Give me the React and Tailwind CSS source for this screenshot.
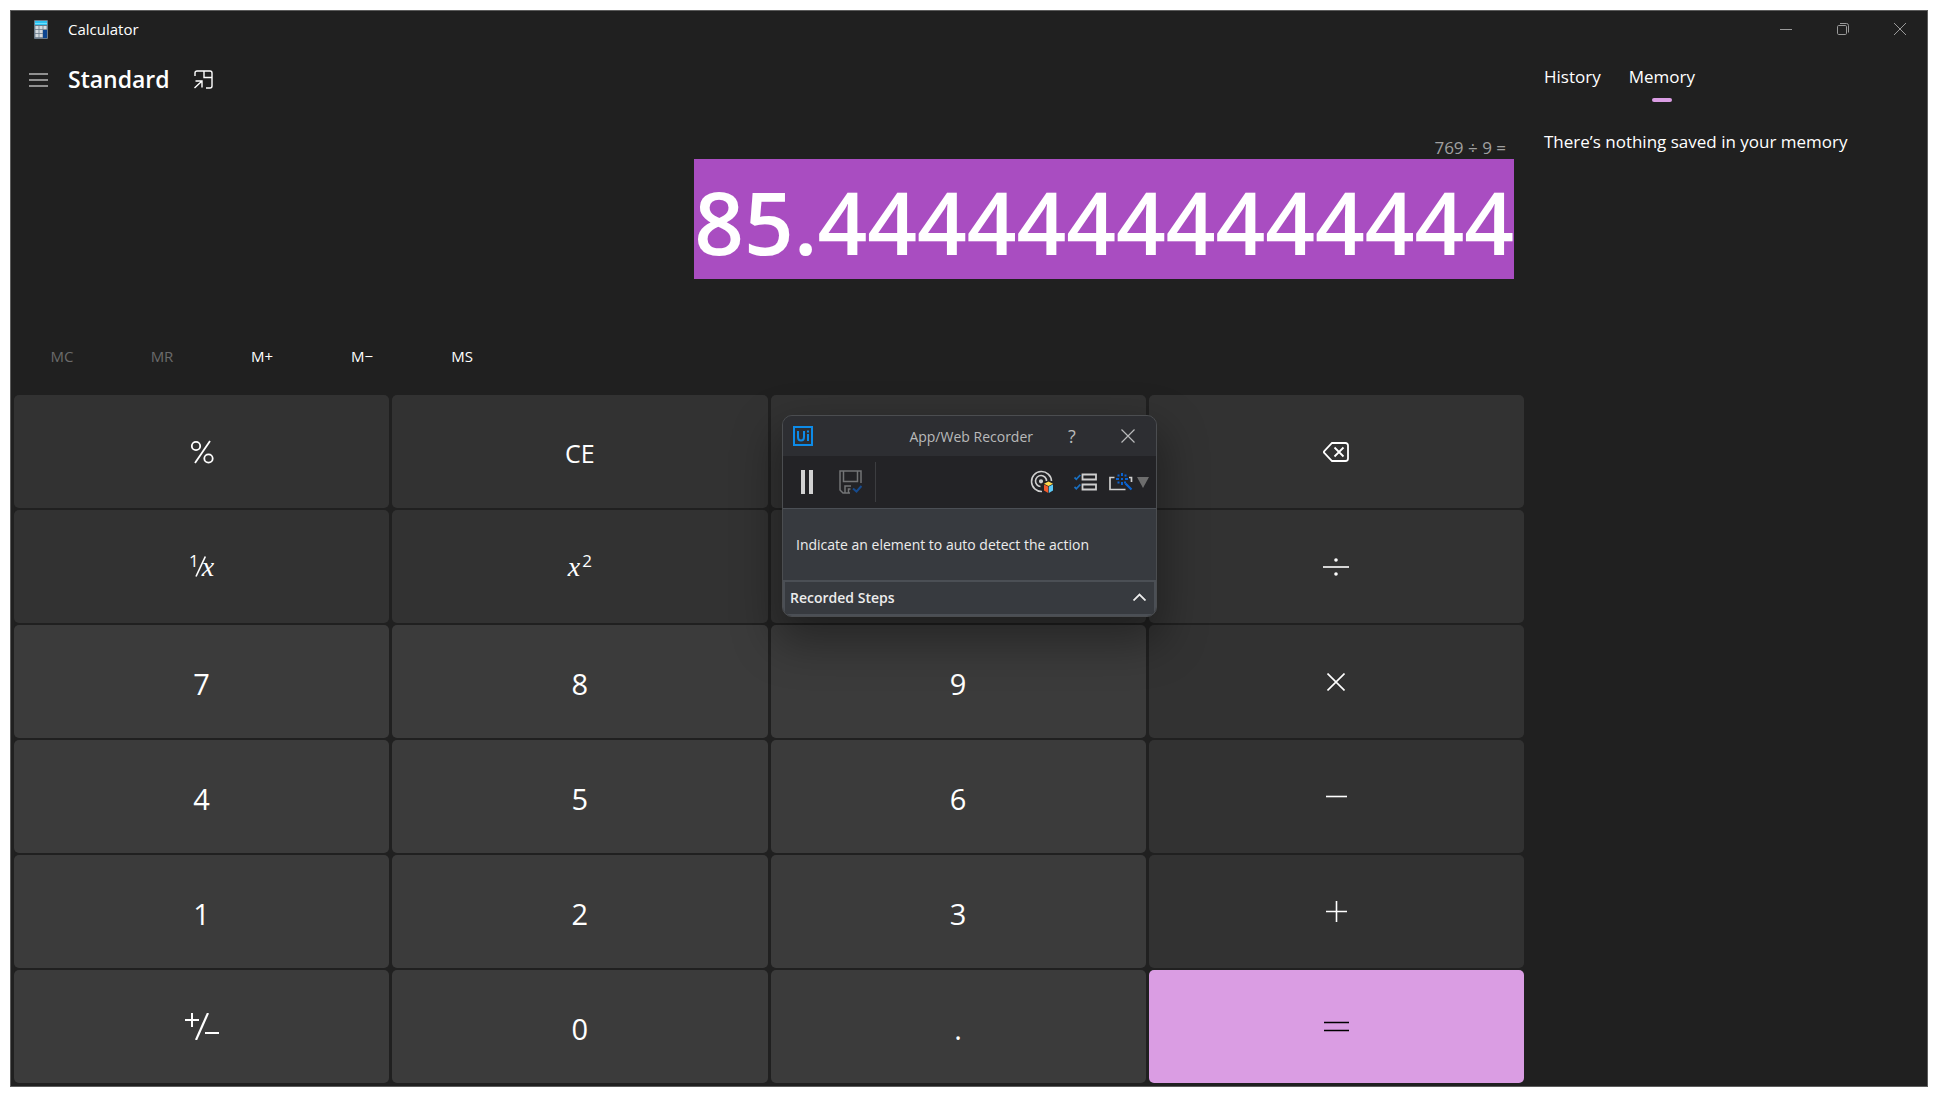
import React from "react";

const stroke = { fill: "none", stroke: "currentColor" };

function CalculatorLogo() {
  return (
    <svg width="14" height="19" viewBox="0 0 14 19" aria-hidden="true">
      <rect width="14" height="19" rx="1" fill="#6b7b8a" />
      <rect x="1" y="1" width="12" height="4" fill="#2cc3f3" />
      <rect x="1" y="3" width="12" height="1" fill="#6fe0ff" />
      {[6, 10, 14].map((y) =>
        [1, 5, 9].map((x) => (
          <rect key={`${x}-${y}`} x={x + 0.4} y={y} width="3.2" height="3.2" fill="#d5dbe0" />
        ))
      )}
      <rect x="9" y="10" width="4" height="8" fill="#0c4590" />
    </svg>
  );
}

function TitleBar() {
  return (
    <header className="flex h-9 items-center">
      <div className="flex flex-1 items-center gap-5 pl-[23px]">
        <CalculatorLogo />
        <span className="text-[15px] leading-5">Calculator</span>
      </div>
      <div className="-mr-px flex text-[#9a9a9a]">
        <button aria-label="Minimize" className="flex h-[34px] w-[57px] items-center justify-center">
          <svg width="12" height="12" viewBox="0 0 12 12" {...stroke}>
            <path d="M0 6.5h12" />
          </svg>
        </button>
        <button aria-label="Restore" className="flex h-[34px] w-[57px] items-center justify-center">
          <svg width="12" height="12" viewBox="0 0 12 12" {...stroke}>
            <rect x="0.5" y="2.5" width="9" height="9" rx="1.2" />
            <path d="M3 0.5h6.5a2 2 0 0 1 2 2V9.5" />
          </svg>
        </button>
        <button aria-label="Close" className="flex h-[34px] w-[57px] items-center justify-center">
          <svg width="12" height="12" viewBox="0 0 12 12" {...stroke}>
            <path d="M0 0l12 12M12 0L0 12" />
          </svg>
        </button>
      </div>
    </header>
  );
}

const svg = (w, h, children, sw = 1.6) => (
  <svg width={w} height={h} viewBox={`0 0 ${w} ${h}`} fill="none" stroke="currentColor" strokeWidth={sw} aria-hidden="true">
    {children}
  </svg>
);

const OneOver = (
  <span className="flex items-center leading-8">
    <span className="-mt-3 text-[17px]">1</span>
    <svg width="11" height="21" viewBox="0 0 11 21" className="-ml-1" aria-hidden="true">
      <path d="M1 20.500L10.300 0.500" stroke="currentColor" strokeWidth="1.600" />
    </svg>
    <span className="-ml-1 font-['Liberation_Serif'] text-[28px] italic">x</span>
  </span>
);

const Square = (
  <span className="flex items-center leading-8">
    <span className="font-['Liberation_Serif'] text-[28px] italic">x</span>
    <span className="-mt-3 ml-0.5 text-[17px]">2</span>
  </span>
);

const KEYS = [
  { id: "Percent", kind: "op", face: svg(24, 24, <><circle cx="6" cy="6" r="4.200" /><circle cx="18.500" cy="18.500" r="4.200" /><path d="M20 1L5 23" /></>, 1.8) },
  { id: "CE", kind: "op", face: <span className="mt-1 text-[25px]">CE</span> },
  { id: "C", kind: "op", face: <span /> },
  { id: "Backspace", kind: "op", face: svg(26, 20, <><path d="M9 1h13.500a2.500 2.500 0 0 1 2.500 2.500v13a2.500 2.500 0 0 1-2.500 2.500H9L1.500 11.200a1.700 1.700 0 0 1 0-2.400z" /><path d="M11.500 5.500l9 9M20.500 5.500l-9 9" /></>, 1.8) },
  { id: "Reciprocal", kind: "op", face: OneOver },
  { id: "Square", kind: "op", face: Square },
  { id: "Square root", kind: "op", face: <span /> },
  { id: "Divide", kind: "op", face: svg(26, 20, <><path d="M0 10h26" /><circle cx="13" cy="3" r="1" fill="currentColor" /><circle cx="13" cy="17" r="1" fill="currentColor" /></>) },
  { id: "7", kind: "num" },
  { id: "8", kind: "num" },
  { id: "9", kind: "num" },
  { id: "Multiply", kind: "op", face: svg(18, 18, <path d="M0.500 0.500l17 17M17.500 0.500l-17 17" />) },
  { id: "4", kind: "num" },
  { id: "5", kind: "num" },
  { id: "6", kind: "num" },
  { id: "Subtract", kind: "op", face: svg(21, 21, <path d="M0 10.500h21" />) },
  { id: "1", kind: "num" },
  { id: "2", kind: "num" },
  { id: "3", kind: "num" },
  { id: "Add", kind: "op", face: svg(21, 21, <path d="M0 10.500h21M10.500 0v21" />) },
  { id: "Negate", kind: "num", face: svg(34, 27, <><path d="M0 7h14M7 0v14M20 20h14" /><path d="M23 0L11 27" strokeWidth="2.200" /></>, 2) },
  { id: "0", kind: "num" },
  { id: ".", kind: "num" },
  { id: "Equals", kind: "eq", face: svg(25, 11, <path d="M0 1.500h25M0 9.500h25" />) },
];

const KIND = {
  op: "bg-[#323232]",
  num: "bg-[#3b3b3b]",
  eq: "bg-[#da9de3] text-black",
};

function Keypad() {
  return (
    <div className="grid flex-1 auto-rows-fr grid-cols-4 gap-x-[3px] gap-y-0.5 px-[3px] pb-[3px]">
      {KEYS.map((k) => (
        <button key={k.id} aria-label={k.id} className={`flex items-center justify-center rounded-[5px] ${KIND[k.kind]}`}>
          {k.face ?? <span className="mt-1 text-[29px]">{k.id}</span>}
        </button>
      ))}
    </div>
  );
}

function MemoryBar() {
  const items = [
    ["MC", true],
    ["MR", true],
    ["M+", false],
    ["M−", false],
    ["MS", false],
  ];
  return (
    <div className="flex h-[76px] pb-0.5 pl-px">
      {items.map(([label, off]) => (
        <button key={label} disabled={off} className="w-[100px] text-[15px] disabled:text-[#6b6b6b]">
          {label}
        </button>
      ))}
    </div>
  );
}

function Display() {
  return (
    <section className="flex h-[224px] flex-col items-end">
      <p className="mt-[41px] pr-[21px] text-[17px] leading-[23px] text-[#a0a0a0]">769 ÷ 9 =</p>
      <output className="mr-[13px] block h-[120px] bg-[#a94dc1] text-[87px] leading-[125px] font-semibold">
        85.44444444444444
      </output>
    </section>
  );
}

function SidePanel() {
  return (
    <aside className="w-[400px] shrink-0 pl-[17px] text-[17px] leading-6">
      <div role="tablist" className="flex gap-7 pt-[18px]">
        <button role="tab" aria-selected="false" className="flex h-[38px] flex-col">History</button>
        <button role="tab" aria-selected="true" className="flex h-[38px] flex-col items-center gap-[9px]">
          <span>Memory</span>
          <span className="h-1 w-5 shrink-0 rounded-full bg-[#da9de3]" />
        </button>
      </div>
      <p className="mt-[27px]">There’s nothing saved in your memory</p>
    </aside>
  );
}

function Recorder() {
  return (
    <section
      aria-label="App/Web Recorder"
      className="absolute top-[415px] left-[782px] w-[375px] overflow-hidden rounded-[10px] border border-[#4b4d50] bg-[#373a3f] shadow-[0_20px_44px_6px_rgba(0,0,0,0.35)]"
    >
      <div className="flex h-10 items-center bg-[#2d2e32] pl-[10px] text-[#b9babb]">
        <svg width="20" height="20" viewBox="0 0 20 20" aria-label="UiPath">
          <rect x="1" y="1" width="18" height="18" fill="none" stroke="#0d8be8" strokeWidth="2" />
          <path d="M5 5v6q0 3.500 3 3.500t3-3.500V5M15 8v7M15 4.500v2" fill="none" stroke="#0d8be8" strokeWidth="2" />
        </svg>
        <h2 className="ml-auto text-[14px]">App/Web Recorder</h2>
        <button aria-label="Help" className="ml-[29px] w-5 text-[18px]">?</button>
        <button aria-label="Close recorder" className="mr-[21px] ml-[39px]">
          <svg width="14" height="14" viewBox="0 0 14 14" {...stroke} strokeWidth="1.2">
            <path d="M0.500 0.500l13 13M13.500 0.500l-13 13" />
          </svg>
        </button>
      </div>
      <div className="flex h-[53px] items-center border-b border-[#4b4f55] bg-[#232326] pr-[7px] pl-[18px]">
        <button aria-label="Pause">
          <svg width="13" height="24" viewBox="0 0 13 24" fill="#d2d2d2">
            <rect width="4" height="24" />
            <rect x="8" width="4" height="24" />
          </svg>
        </button>
        <button aria-label="Save" className="ml-[25px]">
          <svg width="23" height="24" viewBox="0 0 23 24" fill="none" stroke="#737476" strokeWidth="1.5">
            <path d="M22 13V1H1v19l3 3h7" />
            <path d="M4.500 1v10.500h14V1M6 23v-7h6M9.500 23v-4h2" />
            <path d="M14 18.500l3.500 3 5-5.500" stroke="#164a8c" strokeWidth="2" />
          </svg>
        </button>
        <span className="ml-[13px] h-10 w-px bg-[#3c3d40]" />
        <button aria-label="Indicate target" className="ml-auto">
          <svg width="24" height="24" viewBox="0 0 24 24" fill="none" stroke="#cfcfcf" strokeWidth="1.600">
            <path d="M12 21.500A10 10 0 1 1 21.500 11" />
            <path d="M10.500 16.500A5.500 5.500 0 1 1 16.500 11" />
            <circle cx="11" cy="11.300" r="1.300" fill="#cfcfcf" />
            <path d="M18.500 11.500l4.500 2.200-4.500 2.300-4.500-2.300z" fill="#ffd84d" stroke="none" />
            <path d="M14 14.500l4.200 2.100V23L14 20.500z" fill="#f2592a" stroke="none" />
            <path d="M23 14.500l-4.200 2.100V23l4.200-2.500z" fill="#5cc8f5" stroke="none" />
          </svg>
        </button>
        <button aria-label="Step list" className="ml-5">
          <svg width="23" height="18" viewBox="0 0 23 18" fill="none" strokeWidth="1.800">
            <path d="M8.500 1.500H22v5H8.500zM8.500 11.500H22v5H8.500z" stroke="#cfcfcf" />
            <path d="M0.500 4.500l1.800 1.800 4-4.300M0.500 14l1.800 1.800 4-4.300" stroke="#1a6fc0" />
          </svg>
        </button>
        <button aria-label="Detection options" className="ml-3 flex items-center gap-1">
          <svg width="24" height="18" viewBox="0 0 24 18" fill="none" strokeWidth="1.700">
            <path d="M5.500 4.500H1v12h15.500M20 4.500h2.500V9" stroke="#cfcfcf" />
            <path d="M16.500 10.500l6 6" stroke="#0a63d1" strokeWidth="2.200" />
            <g fill="#0a63d1">
              <rect x="12" y="0" width="2" height="3" />
              <rect x="12" y="9" width="2" height="3" />
              <rect x="7" y="5" width="3" height="2" />
              <rect x="16" y="5" width="3" height="2" />
              <rect x="12" y="5" width="2" height="2" />
              <rect x="8.500" y="1.500" width="2" height="2" />
              <rect x="15.500" y="1.500" width="2" height="2" />
              <rect x="8.500" y="8.500" width="2" height="2" />
              <rect x="15" y="8.500" width="2" height="2" />
            </g>
          </svg>
          <svg width="12" height="11" viewBox="0 0 12 11" fill="#6d6d6d">
            <path d="M0 0h12L6 11z" />
          </svg>
        </button>
      </div>
      <p className="flex h-[71px] items-center pl-[13px] text-[14px] text-[#ececec]">
        Indicate an element to auto detect the action
      </p>
      <button
        aria-expanded="false"
        className="flex h-[36px] w-full items-center justify-between border-2 border-[#4b4f55] pr-2 pb-0.5 pl-[5px] text-[14px] font-semibold text-[#ececec]"
      >
        Recorded Steps
        <svg width="13" height="8" viewBox="0 0 13 8" {...stroke} strokeWidth="1.800">
          <path d="M0.500 7.500l6-6 6 6" />
        </svg>
      </button>
    </section>
  );
}

export default function App() {
  return (
    <div className="relative flex h-screen min-h-[700px] bg-white px-[10px] pt-[10px] pb-[11px] font-['Open_Sans','Noto_Sans',sans-serif]">
      <main className="flex min-w-0 flex-1 flex-col border border-[#5c5c5c] bg-[#202020] text-white">
        <TitleBar />
        <div className="flex min-h-0 flex-1">
          <div className="flex min-w-0 flex-1 flex-col">
            <div className="flex h-[48px] items-center pt-4 pl-[18px]">
              <button aria-label="Open navigation" className="mt-0.5">
                <svg width="19" height="14" viewBox="0 0 19 14" {...stroke} strokeWidth="1.200">
                  <path d="M0 1h19M0 7h19M0 13h19" />
                </svg>
              </button>
              <h1 className="ml-5 text-[23px] leading-8 font-semibold">Standard</h1>
              <button aria-label="Keep on top" className="ml-[24px]">
                <svg width="19" height="19" viewBox="0 0 19 19" {...stroke} strokeWidth="1.400">
                  <path d="M1 6V3a2 2 0 0 1 2-2h13a2 2 0 0 1 2 2v13a2 2 0 0 1-2 2h-4" />
                  <path d="M10 1v6.500h8M1.500 11H8v6.500M8 11l-7.500 7" />
                </svg>
              </button>
            </div>
            <Display />
            <MemoryBar />
            <Keypad />
          </div>
          <SidePanel />
        </div>
      </main>
      <Recorder />
    </div>
  );
}
